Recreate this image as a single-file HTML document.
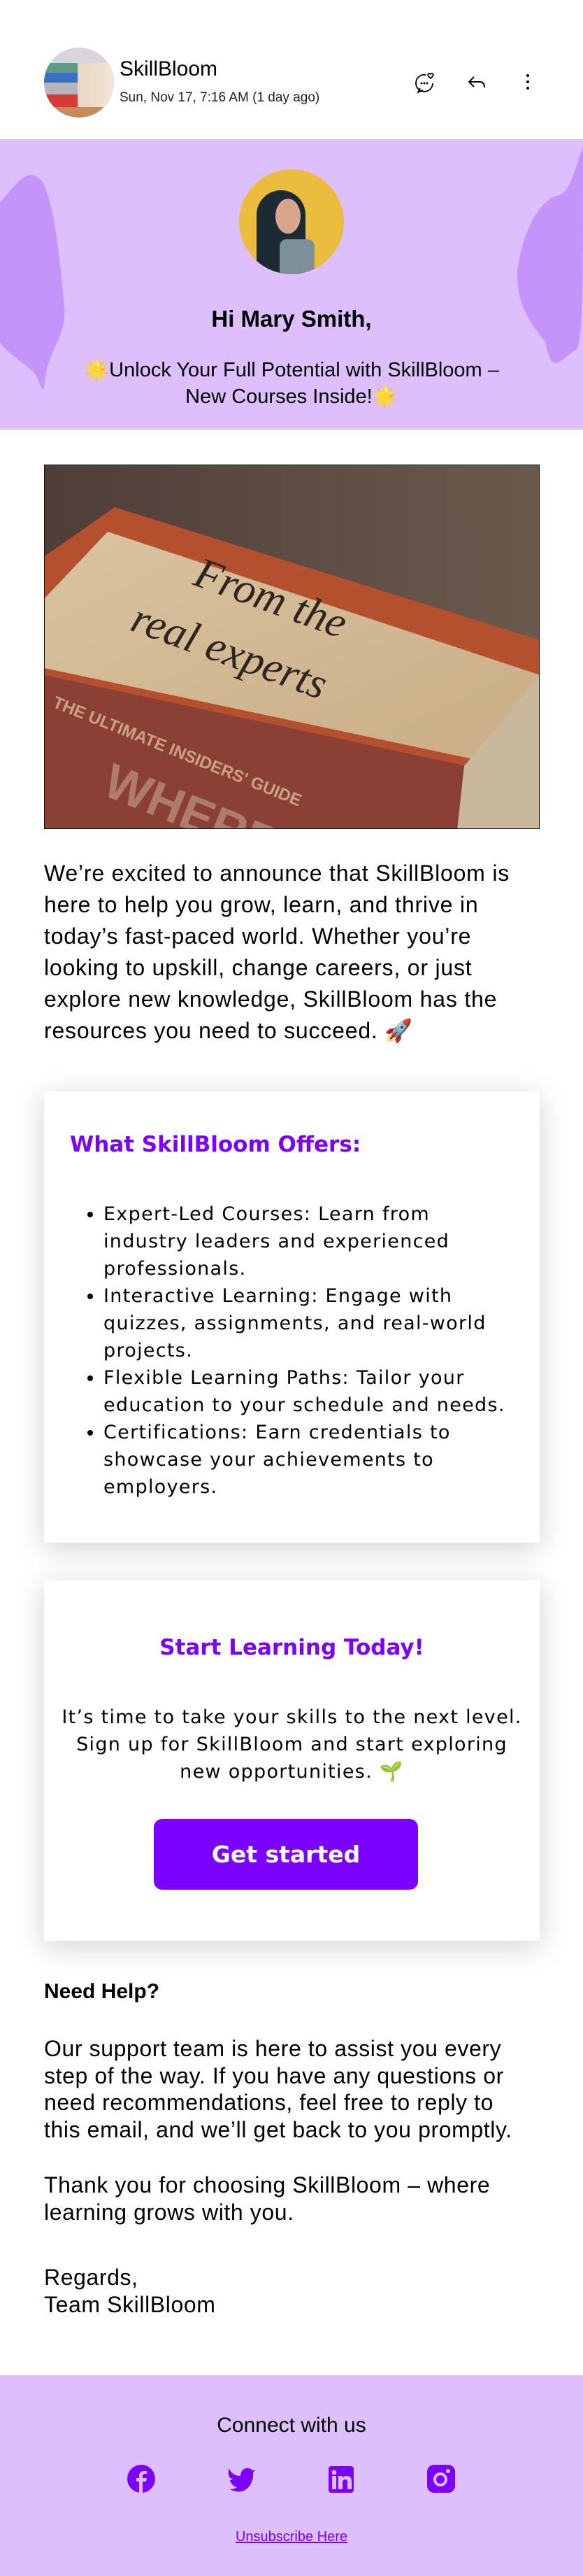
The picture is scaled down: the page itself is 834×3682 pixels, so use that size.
<!DOCTYPE html>
<html><head><meta charset="utf-8">
<style>
*{margin:0;padding:0;box-sizing:border-box}
body{width:834px;height:3682px;background:#fff;font-family:"Liberation Sans",sans-serif;color:#000;position:relative;overflow:hidden}
.abs{position:absolute}
.card{position:absolute;left:63px;width:709px;background:#fff;box-shadow:0 8px 40px rgba(0,0,0,0.18)}
.ct{font-family:"DejaVu Sans",sans-serif;font-weight:bold;color:#7b00ff;font-size:31px}
.cb{font-family:"DejaVu Sans",sans-serif;font-size:27px;line-height:39px;letter-spacing:1.3px;white-space:nowrap}
.p{font-size:32px;line-height:45px;white-space:nowrap;letter-spacing:0.8px}
.q{font-size:32px;line-height:38.5px;white-space:nowrap;letter-spacing:0.6px}
</style></head><body>
<!-- header -->
<div class="abs" style="left:63px;top:68px;width:100px;height:100px;border-radius:50%;overflow:hidden;background:#ddd">
<div style="position:absolute;left:0;top:0;width:100px;height:22px;background:#d9d4de"></div>
<div style="position:absolute;left:0;top:22px;width:100px;height:14px;background:#5f9a86"></div>
<div style="position:absolute;left:0;top:36px;width:100px;height:14px;background:#3a6fc4"></div>
<div style="position:absolute;left:0;top:50px;width:100px;height:17px;background:#b4b6bc"></div>
<div style="position:absolute;left:0;top:67px;width:100px;height:18px;background:#d83a35"></div>
<div style="position:absolute;left:0;top:85px;width:100px;height:15px;background:#c98a5a"></div>
<div style="position:absolute;left:48px;top:22px;width:52px;height:63px;background:linear-gradient(90deg,#e8d5c0,#f2e6d8)"></div>
</div>
<div class="abs" style="left:171px;top:82px;font-size:30px;">SkillBloom</div>
<div class="abs" style="left:171px;top:129px;font-size:19px;color:#222">Sun, Nov 17, 7:16 AM (1 day ago)</div>
<svg class="abs" style="left:592px;top:102px" width="32" height="32" viewBox="0 0 32 32" fill="none" stroke="#000" stroke-width="1.8"><path d="M17 5A12 12 0 1 0 27 17"/><path d="M9 24 L6 30 L13 27"/><path d="M24 4c-2-2-5 0-3 3l3 3 3-3c2-3-1-5-3-3z"/><circle cx="11" cy="17" r=".6"/><circle cx="15" cy="17" r=".6"/><circle cx="19" cy="17" r=".6"/></svg>
<svg class="abs" style="left:668px;top:106px" width="28" height="24" viewBox="0 0 28 24" fill="none" stroke="#000" stroke-width="2"><path d="M10 4 L3 11 L10 18"/><path d="M3 11 H18 Q25 11 25 19"/></svg>
<div class="abs" style="left:753px;top:106px;width:5px;height:24px">
<div style="width:4px;height:4px;border-radius:2px;background:#000;margin-bottom:5px"></div>
<div style="width:4px;height:4px;border-radius:2px;background:#000;margin-bottom:5px"></div>
<div style="width:4px;height:4px;border-radius:2px;background:#000"></div></div>
<!-- banner -->
<div class="abs" style="left:0;top:199px;width:834px;height:415px;background:#dcbffc;overflow:hidden">
<svg class="abs" style="left:0;top:0" width="834" height="415" viewBox="0 0 834 415"><path fill="#c494fa" d="M0 90 C20 70 35 40 55 55 C75 70 85 160 92 240 C96 280 70 300 65 340 C60 380 60 340 45 330 C20 310 5 300 0 290 Z"/><path fill="#c494fa" d="M834 10 C820 50 815 75 800 80 C770 85 745 140 740 190 C738 240 765 270 780 290 C790 340 800 315 825 300 C834 290 834 200 834 10 Z"/></svg>
<div class="abs" style="left:342px;top:43px;width:150px;height:150px;border-radius:50%;overflow:hidden;background:#eabd3f">
<div style="position:absolute;left:25px;top:30px;width:70px;height:125px;border-radius:40px 40px 0 0;background:#1d2a33"></div>
<div style="position:absolute;left:52px;top:42px;width:36px;height:50px;border-radius:50%;background:#d9a58c"></div>
<div style="position:absolute;left:58px;top:100px;width:50px;height:60px;background:#7d8f98;border-radius:10px"></div>
</div>
<div class="abs" style="left:0;top:238px;width:834px;text-align:center;font-size:33px;font-weight:bold">Hi Mary Smith,</div>
<div class="abs" style="left:40px;top:311px;width:754px;text-align:center;font-size:29px;line-height:38px">🌟Unlock Your Full Potential with SkillBloom –<br>New Courses Inside!🌟</div>
</div>
<!-- hero image -->
<div class="abs" style="left:63px;top:664px;width:709px;height:521px;border:1px solid #111;overflow:hidden;background:#5b4a41">
<svg width="709" height="521" viewBox="0 0 709 521"><defs><linearGradient id="g" x1="0" y1="0" x2="1" y2="0"><stop offset="0" stop-color="#4f3e38"/><stop offset="1" stop-color="#6a5a4e"/></linearGradient><linearGradient id="pg" x1="0" y1="0" x2="1" y2="1"><stop offset="0" stop-color="#d9c39f"/><stop offset="1" stop-color="#c9ad86"/></linearGradient></defs>
<rect width="709" height="521" fill="url(#g)"/>
<path d="M0 130 L100 60 L709 250 L709 521 L0 521Z" fill="#b5502f"/>
<path d="M0 190 L90 95 L709 300 L660 430 L0 290Z" fill="url(#pg)"/>
<path d="M0 300 L650 440 L600 521 L0 521Z" fill="#8a4034"/>
<path d="M600 430 L709 300 L709 521 L590 521Z" fill="#c9b89c"/>
<text x="210" y="170" transform="rotate(20 210 170)" font-family="Liberation Serif" font-style="italic" font-size="62" fill="#2f2520">From the</text>
<text x="120" y="235" transform="rotate(20 120 235)" font-family="Liberation Serif" font-style="italic" font-size="62" fill="#2f2520">real experts</text>
<text x="10" y="345" transform="rotate(22 10 345)" font-family="Liberation Sans" font-weight="bold" font-size="24" fill="#e9c9a9" opacity=".7">THE ULTIMATE INSIDERS' GUIDE</text>
<text x="80" y="470" transform="rotate(22 80 470)" font-family="Liberation Sans" font-weight="bold" font-size="70" fill="#d7b9a0" opacity=".5">WHERE</text>
</svg></div>
<div class="abs p" style="left:63px;top:1226px">We’re excited to announce that SkillBloom is<br>here to help you grow, learn, and thrive in<br>today’s fast-paced world. Whether you’re<br>looking to upskill, change careers, or just<br>explore new knowledge, SkillBloom has the<br>resources you need to succeed. 🚀</div>
<!-- card 1 -->
<div class="card" style="top:1560px;height:645px">
<div class="ct abs" style="left:37px;top:58px">What SkillBloom Offers:</div>
<ul class="cb abs" style="left:85px;top:156px;list-style:disc">
<li>Expert-Led Courses: Learn from<br>industry leaders and experienced<br>professionals.</li>
<li>Interactive Learning: Engage with<br>quizzes, assignments, and real-world<br>projects.</li>
<li>Flexible Learning Paths: Tailor your<br>education to your schedule and needs.</li>
<li>Certifications: Earn credentials to<br>showcase your achievements to<br>employers.</li>
</ul></div>
<!-- card 2 -->
<div class="card" style="top:2259px;height:515px">
<div class="ct abs" style="left:0;width:709px;text-align:center;top:78px">Start Learning Today!</div>
<div class="cb abs" style="left:0;width:709px;text-align:center;top:176px">It’s time to take your skills to the next level.<br>Sign up for SkillBloom and start exploring<br>new opportunities. 🌱</div>
<div class="abs" style="left:157px;top:341px;width:378px;height:101px;border-radius:12px;background:#7b00ff;color:#fff;font-family:'DejaVu Sans',sans-serif;font-weight:bold;font-size:33px;text-align:center;line-height:101px">Get started</div>
</div>
<div class="abs" style="left:63px;top:2830px;font-size:30px;font-weight:bold">Need Help?</div>
<div class="abs q" style="left:63px;top:2909px">Our support team is here to assist you every<br>step of the way. If you have any questions or<br>need recommendations, feel free to reply to<br>this email, and we’ll get back to you promptly.</div>
<div class="abs q" style="left:63px;top:3104px">Thank you for choosing SkillBloom – where<br>learning grows with you.</div>
<div class="abs q" style="left:63px;top:3236px">Regards,<br>Team SkillBloom</div>
<!-- footer -->
<div class="abs" style="left:0;top:3395px;width:834px;height:287px;background:#dcbffc">
<div class="abs" style="left:0;width:834px;text-align:center;top:55px;font-size:30px">Connect with us</div>
<svg class="abs" style="left:182px;top:128px" width="40" height="40" viewBox="0 0 40 40"><circle cx="20" cy="20" r="20" fill="#7b00ff"/><path d="M22 40V24h5l1-5h-6v-3c0-2 1-3 3-3h3V9h-4c-5 0-7 3-7 7v3h-4v5h4v16z" fill="#dcbffc"/></svg>
<svg class="abs" style="left:326px;top:130px" width="40" height="38" viewBox="0 0 40 38"><path fill="#7b00ff" d="M1 3c4 7 9 11 17 11 0-7 5-12 11-11 3 0 5 2 6 3l4-1-3 4c1 12-5 24-16 27-5 1-12 0-17-3 4 0 8-1 10-3-5-1-9-5-10-10 2 0 3 0 4-1-5-2-7-6-6-12z"/></svg>
<svg class="abs" style="left:470px;top:130px" width="36" height="38" viewBox="0 0 36 38"><rect width="36" height="38" rx="4" fill="#7b00ff"/><circle cx="8" cy="9" r="3.3" fill="#dcbffc"/><rect x="5" y="14" width="6" height="19" fill="#dcbffc"/><path d="M14 14h6v3c1-2 3-3 6-3 5 0 7 3 7 8v11h-6V23c0-3-1-4-3-4s-4 1-4 4v10h-6z" fill="#dcbffc"/></svg>
<svg class="abs" style="left:611px;top:128px" width="40" height="40" viewBox="0 0 40 40"><rect width="40" height="40" rx="10" fill="#7b00ff"/><circle cx="19" cy="21" r="8" fill="none" stroke="#dcbffc" stroke-width="4"/><circle cx="30" cy="9" r="3" fill="#dcbffc"/></svg>
<div class="abs" style="left:0;width:834px;text-align:center;top:220px;font-size:20px;color:#7b00ff;text-decoration:underline">Unsubscribe Here</div>
</div>
</body></html>
